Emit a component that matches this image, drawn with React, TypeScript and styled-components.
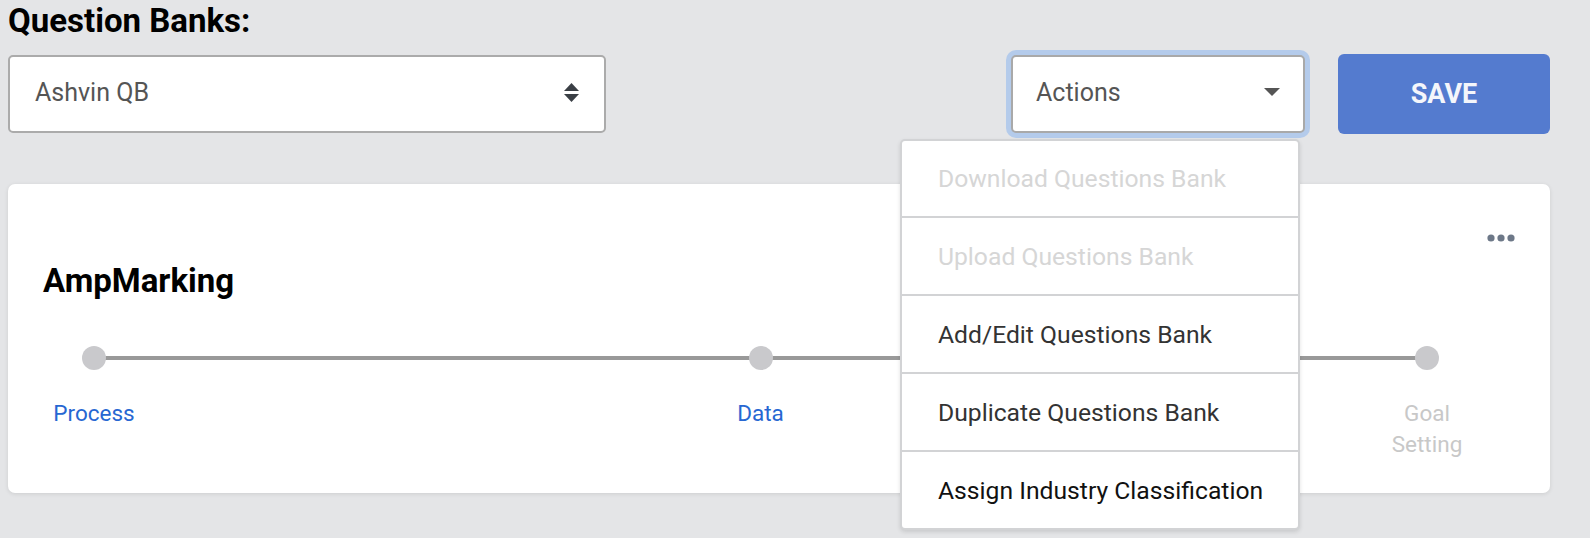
import React from "react";
import styled, { createGlobalStyle } from "styled-components";

const GlobalStyle = createGlobalStyle`
  html, body {
    margin: 0;
    padding: 0;
    background: #e4e5e7;
    font-family: Roboto, "Liberation Sans", Arial, sans-serif;
  }
  * {
    box-sizing: border-box;
  }
`;

type Step = { label: string; active: boolean };

const steps: Step[] = [
  { label: "Process", active: true },
  { label: "Data", active: true },
  { label: "Goal Setting", active: false },
];

type MenuEntry = { label: string; disabled?: boolean; strong?: boolean };

const menuEntries: MenuEntry[] = [
  { label: "Download Questions Bank", disabled: true },
  { label: "Upload Questions Bank", disabled: true },
  { label: "Add/Edit Questions Bank" },
  { label: "Duplicate Questions Bank" },
  { label: "Assign Industry Classification", strong: true },
];

const App = () => (
  <Page>
    <GlobalStyle />
    <Heading>Question Banks:</Heading>
    <TopBar>
      <SelectBox>
        <SelectValue>Ashvin QB</SelectValue>
        <svg width="15" height="19" viewBox="0 0 15 19">
          <path d="M7.5 0 L15 8 L0 8 Z" fill="#3a3f45" />
          <path d="M0 11 L15 11 L7.5 19 Z" fill="#3a3f45" />
        </svg>
      </SelectBox>
      <RightGroup>
        <ActionsWrap>
          <ActionsBox>
            <ActionsLabel>Actions</ActionsLabel>
            <svg width="16" height="8" viewBox="0 0 16 8">
              <path d="M0 0 L16 0 L8 8 Z" fill="#555" />
            </svg>
          </ActionsBox>
          <Menu>
            {menuEntries.map((m) => (
              <MenuItem key={m.label} $disabled={m.disabled} $strong={m.strong}>
                {m.label}
              </MenuItem>
            ))}
          </Menu>
        </ActionsWrap>
        <SaveButton>SAVE</SaveButton>
      </RightGroup>
    </TopBar>

    <Card>
      <CardHeader>
        <CardTitle>AmpMarking</CardTitle>
        <MoreButton aria-label="more">
          <svg width="28" height="8" viewBox="0 0 28 8">
            <circle cx="4" cy="4" r="3.6" fill="#6d7888" />
            <circle cx="14" cy="4" r="3.6" fill="#6d7888" />
            <circle cx="24" cy="4" r="3.6" fill="#6d7888" />
          </svg>
        </MoreButton>
      </CardHeader>
      <Timeline>
        {steps.map((s) => (
          <StepCol key={s.label}>
            <Dot />
            <StepLabel $active={s.active}>{s.label}</StepLabel>
          </StepCol>
        ))}
      </Timeline>
    </Card>
  </Page>
);

export default App;

const Page = styled.div`
  min-height: 100vh;
  padding: 2px 40px 0 8px;
`;

const Heading = styled.h2`
  margin: 0;
  font-size: 33px;
  line-height: 38px;
  font-weight: 700;
  color: #000;
`;

const TopBar = styled.div`
  display: flex;
  justify-content: space-between;
  align-items: center;
  margin-top: 14px;
`;

const SelectBox = styled.div`
  width: 598px;
  height: 78px;
  background: #fff;
  border: 2px solid #ababab;
  border-radius: 5px;
  display: flex;
  align-items: center;
  justify-content: space-between;
  padding: 0 25px 3px 25px;
`;

const SelectValue = styled.span`
  font-size: 25px;
  color: #555;
`;

const RightGroup = styled.div`
  display: flex;
  align-items: center;
  gap: 33px;
`;

const ActionsWrap = styled.div`
  position: relative;
`;

const ActionsBox = styled.div`
  width: 294px;
  height: 78px;
  background: #fff;
  border: 2px solid #a9a9a9;
  border-radius: 5px;
  box-shadow: 0 0 0 5px #b4cbeb;
  display: flex;
  align-items: center;
  justify-content: space-between;
  padding: 0 23px 4px 23px;
`;

const ActionsLabel = styled.span`
  font-size: 25px;
  color: #555;
`;

const Menu = styled.div`
  position: absolute;
  top: calc(100% + 6px);
  right: 5px;
  width: 400px;
  background: #fff;
  border: 2px solid #d2d3d5;
  border-radius: 5px;
  box-shadow: 0 2px 4px rgba(0, 0, 0, 0.12);
  z-index: 10;
  overflow: hidden;
`;

const MenuItem = styled.div<{ $disabled?: boolean; $strong?: boolean }>`
  height: 78px;
  display: flex;
  align-items: center;
  padding-left: 36px;
  font-size: 24.7px;
  color: ${(p) => (p.$disabled ? "#d6d6d6" : p.$strong ? "#111" : "#333")};
  border-top: 2px solid #d2d3d5;
  white-space: nowrap;

  &:first-child {
    border-top: none;
    height: 75px;
  }
`;

const SaveButton = styled.button`
  width: 212px;
  height: 80px;
  border: none;
  border-radius: 6px;
  background: #547bcf;
  color: #f4f6fb;
  font-family: Roboto, "Liberation Sans", Arial, sans-serif;
  font-size: 27px;
  font-weight: 700;
  cursor: pointer;
`;

const Card = styled.div`
  margin-top: 50px;
  background: #fff;
  border-radius: 7px;
  box-shadow: 0 1px 4px rgba(0, 0, 0, 0.1);
  padding: 50px 35px 33px 35px;
`;

const CardHeader = styled.div`
  display: flex;
  justify-content: space-between;
  align-items: flex-start;
`;

const CardTitle = styled.h3`
  margin: 28px 0 0 0;
  font-size: 33px;
  line-height: 38px;
  font-weight: 700;
  color: #000;
`;

const MoreButton = styled.div`
  display: flex;
  cursor: pointer;
`;

const Timeline = styled.div`
  position: relative;
  display: flex;
  justify-content: space-between;
  margin: 46px 37px 0 0;

  &::before {
    content: "";
    position: absolute;
    left: 51px;
    right: 51px;
    top: 10px;
    height: 4px;
    background: #999;
  }
`;

const StepCol = styled.div`
  position: relative;
  width: 102px;
  display: flex;
  flex-direction: column;
  align-items: center;
`;

const Dot = styled.div`
  width: 24px;
  height: 24px;
  border-radius: 50%;
  background: #c9c9cc;
`;

const StepLabel = styled.div<{ $active: boolean }>`
  margin-top: 28px;
  font-size: 22.5px;
  line-height: 31px;
  text-align: center;
  color: ${(p) => (p.$active ? "#2767d2" : "#c8c8c8")};
`;
